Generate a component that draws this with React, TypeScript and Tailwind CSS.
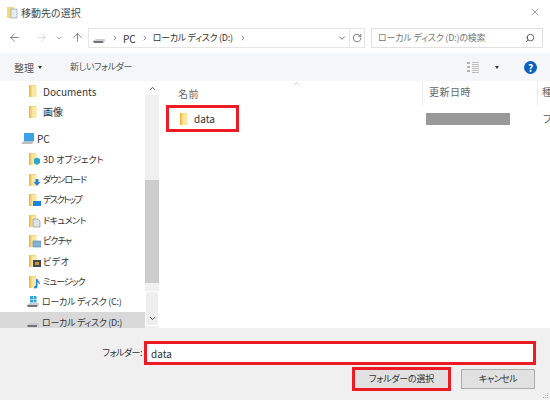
import { ArrowLeft, ArrowRight, ArrowUp, ChevronDown, ChevronRight, ChevronUp, RotateCw, Search, X } from "lucide-react";

function Folder({ overlay }: { overlay?: string }) {
  return (
    <svg width="14" height="14" viewBox="0 0 14 14" className="shrink-0">
      <path d="M2 1h7v12H2z" fill="#f6d77a" />
      <path d="M5 2h4.500v11H5z" fill="#fbe6a2" />
      <path d="M2 1h1.500v12H2z" fill="#e8b949" />
      {overlay === "3d" && <path d="M7 7l3-1.500 3 1.500v4l-3 2-3-2z" fill="#2aa7c9" />}
      {overlay === "down" && <path d="M8.500 6h3v3h2l-3.500 4-3.500-4h2z" fill="#2a7fd6" />}
      {overlay === "desk" && <path d="M6 8h8v5H6z" fill="#1688dc" />}
      {overlay === "doc" && <path d="M6 5h5l2 2v6H6z" fill="#dfe3e8" stroke="#8a97a5" strokeWidth="0.7" />}
      {overlay === "pic" && <path d="M6 7h8v6H6z" fill="#7fb2d9" stroke="#62809a" strokeWidth="0.6" />}
      {overlay === "video" && <path d="M6 6h8v7H6z" fill="#3f4a57" />}
      {overlay === "video" && <path d="M8 8h4v3H8z" fill="#d98d2b" />}
      {overlay === "music" && <path d="M9 4h1.500c.3 2 2.500 2.500 2.500 5h-1c0-1-.7-1.500-1.500-2v4.500c0 1.200-1 2-2 2s-1.500-.6-1.500-1.300c0-1 1-1.700 2-1.500z" fill="#1e88d8" />}
    </svg>
  );
}

function Drive({ win }: { win?: boolean }) {
  return (
    <svg width="14" height="14" viewBox="0 0 14 14" className="shrink-0">
      {win && <path d="M4 1h3v3H4zM7.500 1h3v3h-3zM4 4.500h3v3H4zM7.500 4.500h3v3h-3z" fill="#35a5e5" />}
      <path d="M1 10l3-2h9v2.500L11 12H2z" fill="#c9cdd1" />
      <path d="M1 10h10v2H2z" fill="#6e7479" />
    </svg>
  );
}

function NavRow({ label, text = "text-[9px]", children, pad = "pl-[27px]", selected }: { label: string; text?: string; children: React.ReactNode; pad?: string; selected?: boolean }) {
  return (
    <div className={`flex h-[20.400px] shrink-0 items-center gap-[1px] ${pad} ${selected ? "bg-[#d9d9d9]" : ""}`}>
      {children}
      <span className={`ml-[1px] whitespace-nowrap text-[#333] ${text}`}>{label}</span>
    </div>
  );
}

export default function App() {
  return (
    <div className="relative flex h-[400px] w-[550px] flex-col overflow-hidden bg-white font-['Noto_Sans_CJK_JP',sans-serif] text-[#333] [font-feature-settings:'palt']">
      {/* Title */}
      <div className="flex h-[24px] shrink-0 items-center justify-between pl-[7px] pr-[9px]">
        <div className="flex items-center gap-[3px]">
          <svg width="11" height="13" viewBox="0 0 11 13">
            <path d="M0 1h7v11H0z" fill="#f6d77a" />
            <path d="M4 3h6v9H4z" fill="#e4ecf4" stroke="#8da5bd" strokeWidth="0.7" />
          </svg>
          <span className="text-[10px] text-[#444]">移動先の選択</span>
        </div>
        <X size={12} strokeWidth={1} className="text-[#444]" />
      </div>

      {/* Address row */}
      <div className="flex h-[29px] shrink-0 items-start pl-[8px] pr-[6px] pt-[4px]">
        <div className="mt-[3px] flex w-[80px] items-center">
          <ArrowLeft size={13} strokeWidth={1.3} className="text-[#555]" />
          <ArrowRight size={13} strokeWidth={1.3} className="ml-[14px] text-[#ccc]" />
          <ChevronDown size={8} strokeWidth={2} className="ml-[7px] text-[#777]" />
          <ArrowUp size={13} strokeWidth={1.3} className="ml-[8px] text-[#555]" />
        </div>
        <div className="flex h-[20px] w-[277px] shrink-0 items-center border border-[#e6e6e6] pl-[3px]">
          <Drive />
          <ChevronRight size={8} strokeWidth={2} className="ml-[5px] text-[#555]" />
          <span className="ml-[4px] text-[10px]">PC</span>
          <ChevronRight size={8} strokeWidth={2} className="ml-[5px] text-[#555]" />
          <span className="ml-[4px] text-[9px] tracking-[-0.3px] whitespace-nowrap">ローカル ディスク (D:)</span>
          <ChevronRight size={8} strokeWidth={2} className="ml-[6px] text-[#555]" />
          <ChevronDown size={10} strokeWidth={2} className="ml-auto mr-[2px] text-[#555]" />
          <div className="flex h-full w-[15px] items-center justify-center border-l border-[#e6e6e6]">
            <RotateCw size={10} strokeWidth={1.8} className="text-[#555]" />
          </div>
        </div>
        <div className="ml-[6px] flex h-[20px] w-[172px] shrink-0 items-center justify-between border border-[#e1e1e1] pl-[6px] pr-[7px]">
          <span className="text-[9px] tracking-[-0.2px] whitespace-nowrap text-[#777]">ローカル ディスク (D:)の検索</span>
          <Search size={10} strokeWidth={2} className="-scale-x-100 text-[#444]" />
        </div>
      </div>

      {/* Toolbar */}
      <div className="flex h-[28px] shrink-0 items-center bg-[#f5f6f7] pl-[14px] pr-[13px] text-[10px] text-[#555]">
        <span>整理</span>
        <span className="ml-[4px] h-0 w-0 border-x-[2.500px] border-t-[3px] border-x-transparent border-t-[#333]" />
        <span className="ml-[28px] text-[9px] tracking-[-0.4px]">新しいフォルダー</span>
        <svg width="13" height="13" viewBox="0 0 13 13" className="ml-auto">
          <path d="M0 1h3v2H0zM0 5h3v2H0zM0 9h3v2H0z" fill="#b9b0a8" />
          <path d="M5 1.500h7M5 3.500h7M5 5.500h7M5 7.500h7M5 9.500h7M5 11.500h7" stroke="#a8a8a8" strokeWidth="0.7" />
        </svg>
        <span className="ml-[15px] h-0 w-0 border-x-[2.500px] border-t-[3px] border-x-transparent border-t-[#333]" />
        <span className="ml-[25px] flex h-[13px] w-[13px] items-center justify-center rounded-full bg-[#0a63bd] text-[10px] font-bold text-white">?</span>
      </div>

      {/* Main */}
      <div className="flex h-[247px] shrink-0 overflow-hidden">
        <div className="flex w-[145px] shrink-0 flex-col overflow-hidden">
          <NavRow label="Documents" text="text-[10px]"><Folder /></NavRow>
          <NavRow label="画像" text="text-[10px]"><Folder /></NavRow>
          <div className="h-[7px] shrink-0" />
          <NavRow label="PC" text="text-[10px]" pad="pl-[20px]">
            <svg width="15" height="14" viewBox="0 0 15 14" className="shrink-0">
              <path d="M4 1h10v8H4z" fill="#3ba2e6" />
              <path d="M1 12l3-3h10l-2 3z" fill="#b8bec4" />
            </svg>
          </NavRow>
          <NavRow label="3D オブジェクト"><Folder overlay="3d" /></NavRow>
          <NavRow label="ダウンロード" text="text-[9px] tracking-[-1px]"><Folder overlay="down" /></NavRow>
          <NavRow label="デスクトップ" text="text-[9px] tracking-[-1.400px]"><Folder overlay="desk" /></NavRow>
          <NavRow label="ドキュメント" text="text-[9px] tracking-[-0.500px]"><Folder overlay="doc" /></NavRow>
          <NavRow label="ピクチャ" text="text-[9px] tracking-[-1px]"><Folder overlay="pic" /></NavRow>
          <NavRow label="ビデオ" text="text-[9px] tracking-[0.5px]"><Folder overlay="video" /></NavRow>
          <NavRow label="ミュージック" text="text-[9px] tracking-[-1px]"><Folder overlay="music" /></NavRow>
          <NavRow label="ローカル ディスク (C:)" text="text-[9px] tracking-[-0.300px]" pad="pl-[26px]"><Drive win /></NavRow>
          <NavRow label="ローカル ディスク (D:)" text="text-[9px] tracking-[-0.300px]" pad="pl-[26px]" selected><Drive /></NavRow>
        </div>

        <div className="flex w-[14px] shrink-0 flex-col items-center bg-[#f0f0f0]">
          <div className="flex h-[14px] w-full items-center justify-center bg-white">
            <ChevronUp size={9} strokeWidth={2.5} className="text-[#444]" />
          </div>
          <div className="mt-[85px] h-[103px] w-full bg-[#cdcdcd]" />
          <div className="mt-[8px] flex h-[35px] w-full items-end justify-center border border-white bg-[#eeeeee] pb-[2px]">
            <ChevronDown size={9} strokeWidth={2.5} className="text-[#444]" />
          </div>
        </div>

        <div className="flex min-w-0 flex-1 flex-col overflow-hidden pl-[1px]">
          <div className="relative flex h-[24px] shrink-0 items-center text-[10px] text-[#666]">
            <ChevronUp size={9} strokeWidth={1.2} className="absolute left-[132px] -top-[2px] text-[#999]" />
            <span className="ml-[18px] w-[244px] shrink-0 tracking-[0.5px]">名前</span>
            <span className="h-full w-[115px] shrink-0 border-l border-[#ececec] pl-[6px] pt-[3px] tracking-[0.5px]">更新日時</span>
            <span className="h-full shrink-0 border-l border-[#ececec] pl-[4px] pt-[3px] whitespace-nowrap">種類</span>
          </div>
          <div className="flex h-[27px] shrink-0 items-center text-[10px]">
            <div className="ml-[6px] flex h-[27px] w-[73px] shrink-0 items-center border-[3px] border-[#ed1c24] pl-[9px]">
              <Folder />
              <span className="ml-[2px]">data</span>
            </div>
            <div className="ml-[187px] h-[12px] w-[84px] shrink-0 bg-[#999]" />
            <span className="ml-[33px] shrink-0 whitespace-nowrap text-[#555]">ファ</span>
          </div>
        </div>
      </div>

      {/* Bottom */}
      <div className="flex flex-1 flex-col bg-[#f0f0f0] text-[10px]">
        <div className="mt-[13px] flex items-center">
          <span className="w-[142px] shrink-0 text-right text-[9px] tracking-[-0.5px] whitespace-nowrap text-[#333]">フォルダー:</span>
          <div className="ml-[2px] flex h-[24px] w-[392px] shrink-0 items-center border-[3px] border-[#ed1c24] bg-white pl-[4px]">data</div>
        </div>
        <div className="mt-[2px] flex items-center pl-[352px]">
          <div className="flex h-[24px] w-[99px] shrink-0 items-center justify-center border-[3px] border-[#ed1c24] bg-[#e1e1e1] text-[9px] tracking-[-0.2px]">フォルダーの選択</div>
          <div className="ml-[10px] flex h-[20px] w-[74px] shrink-0 items-center justify-center border border-[#adadad] bg-[#e1e1e1] text-[9px] tracking-[-0.5px]">キャンセル</div>
        </div>
      </div>

      {/* Resize grip */}
      <svg width="6" height="6" viewBox="0 0 6 6" className="absolute bottom-[1px] right-[1px]">
        <path d="M4 0h1v1H4zM2 2h1v1H2zM4 2h1v1H4zM0 4h1v1H0zM2 4h1v1H2zM4 4h1v1H4z" fill="#a8a8a8" />
      </svg>
    </div>
  );
}
